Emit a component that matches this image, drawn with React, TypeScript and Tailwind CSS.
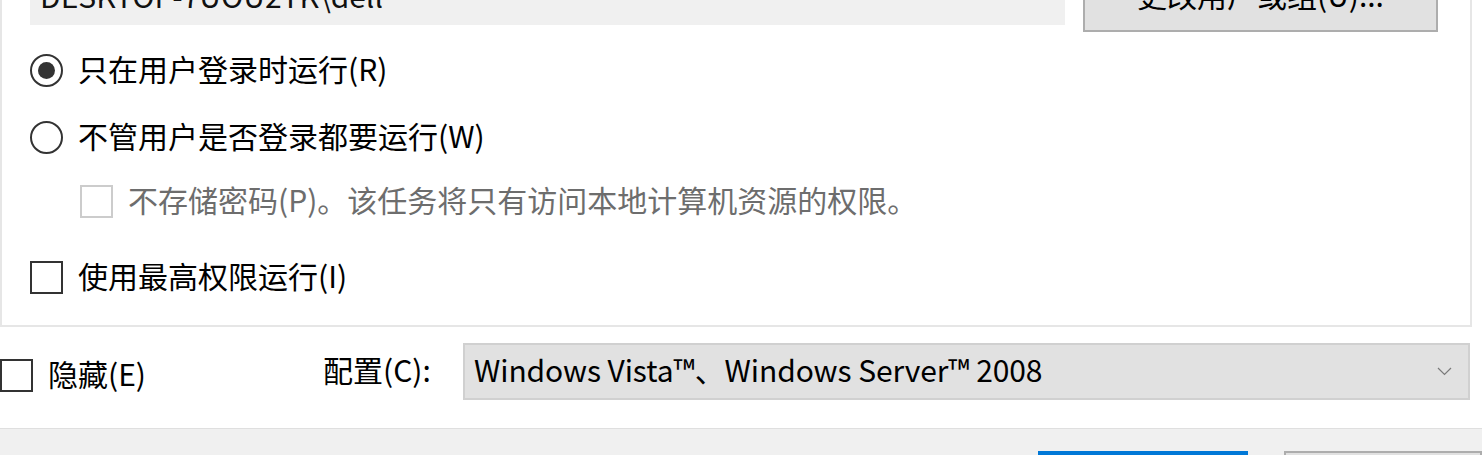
const font = "font-['Noto_Sans_CJK_SC','Noto_Sans',sans-serif]";

function Radio({ checked }: { checked?: boolean }) {
  return (
    <div className="w-[33px] h-[33px] rounded-full border-2 border-[#333333] flex items-center justify-center shrink-0">
      {checked && <div className="w-[17px] h-[17px] rounded-full bg-[#333333]" />}
    </div>
  );
}

function Box({ disabled }: { disabled?: boolean }) {
  return (
    <div
      className={`w-[33px] h-[33px] border-2 shrink-0 ${disabled ? 'border-[#cccccc]' : 'border-[#333333]'}`}
    />
  );
}

export default function App() {
  return (
    <div className={`w-[1482px] h-[455px] bg-white overflow-hidden flex flex-col text-[30px] leading-none text-black ${font}`}>
      <div className="w-[1472px] h-[327px] shrink-0 border-l-2 border-r-2 border-b-2 border-[#e6e6e6] flex flex-col">
        <div className="flex items-start h-[27px] overflow-visible">
          <div className="ml-[28px] w-[1035px] h-[60px] -mt-[35px] bg-[#f0f0f0] flex items-center pl-[10px] text-[#111]">
            DESKTOP-7UOU2TK\dell
          </div>
          <div className="ml-[18px] w-[355px] h-[74px] -mt-[42px] bg-[#e1e1e1] border-2 border-[#adadad] flex items-center justify-center pb-[2px]">
            更改用户或组(U)...
          </div>
        </div>
        <div className="h-[86px] flex items-center pl-[28px] gap-[15px]">
          <Radio checked />
          <span className="pb-[5px]">只在用户登录时运行(R)</span>
        </div>
        <div className="h-[49px] flex items-center pl-[28px] gap-[15px]">
          <Radio />
          <span className="pb-[5px]">不管用户是否登录都要运行(W)</span>
        </div>
        <div className="h-[78px] flex items-center pl-[78px] gap-[15px]">
          <Box disabled />
          <span className="pb-[5px] text-[#6d6d6d]">不存储密码(P)。该任务将只有访问本地计算机资源的权限。</span>
        </div>
        <div className="h-[74px] flex items-center pl-[28px] gap-[15px]">
          <Box />
          <span className="pb-[5px]">使用最高权限运行(I)</span>
        </div>
      </div>

      <div className="h-[101px] shrink-0 flex items-start pt-[16px]">
        <div className="flex items-center gap-[15px] mt-[15px] w-[323px]">
          <Box />
          <span className="pb-[5px]">隐藏(E)</span>
        </div>
        <div className="w-[140px] h-[57px] flex items-center pb-[5px]">配置(C):</div>
        <div className="w-[1007px] h-[57px] bg-[#e1e1e1] border-2 border-[#d0d0d0] flex items-center pl-[9px] pr-[16px]">
          <span className="flex-1 pb-[5px] tracking-[-0.1px]">Windows Vista™、Windows Server™ 2008</span>
          <svg width="15" height="9" viewBox="0 0 15 9" className="shrink-0">
            <polyline points="1,1 7.5,7.5 14,1" fill="none" stroke="#7a7a7a" strokeWidth="1.2" />
          </svg>
        </div>
      </div>

      <div className="flex-1 bg-[#f0f0f0] border-t border-[#dfdfdf] flex items-start pt-[22px]">
        <div className="ml-[1038px] w-[212px] h-[40px] bg-[#0078d7]" />
        <div className="ml-[36px] w-[200px] h-[40px] bg-[#e1e1e1] border-2 border-[#adadad]" />
      </div>
    </div>
  );
}
